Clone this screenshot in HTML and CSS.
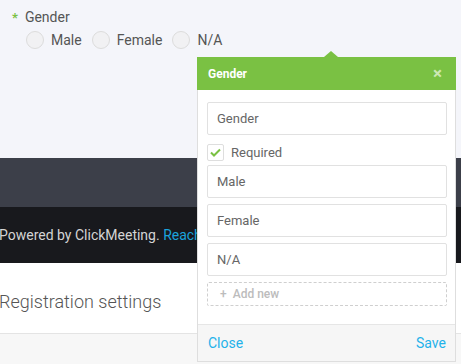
FILE: index.html
```html
<!DOCTYPE html>
<html lang="en">
<head>
  <meta charset="UTF-8" />
  <meta name="viewport" content="width=device-width, initial-scale=1" />
  <title>Registration form</title>
  <link rel="stylesheet" href="styles.css">
</head>
<body>
  <section class="form-preview">
    <div class="field">
      <div class="field-label"><span class="star">*</span> Gender</div>
      <div class="radios">
        <label class="radio"><span class="circle"></span>Male</label>
        <label class="radio"><span class="circle"></span>Female</label>
        <label class="radio"><span class="circle"></span>N/A</label>
      </div>
    </div>
  </section>
  <section class="banner"></section>
  <footer class="powered">
    <p>Powered by ClickMeeting. <a href="#">Reach more people with webinars</a></p>
  </footer>
  <section class="settings">
    <h2>Registration settings</h2>
  </section>
  <section class="settings-body"></section>

  <div class="popup">
    <div class="popup-head">
      <span>Gender</span>
      <span class="close-x">&times;</span>
    </div>
    <div class="popup-body">
      <input type="text" value="Gender" />
      <label class="check">
        <span class="box">
          <svg width="11" height="9" viewBox="0 0 11 9"><path d="M1 4.5 L4 7.5 L10 1.5" fill="none" stroke="#7ac143" stroke-width="2"/></svg>
        </span>
        Required
      </label>
      <input type="text" value="Male" />
      <input type="text" value="Female" />
      <input type="text" value="N/A" />
      <div class="add-new"><span class="plus">+</span> Add new</div>
    </div>
    <div class="popup-foot">
      <a href="#">Close</a>
      <a href="#">Save</a>
    </div>
  </div>
</body>
</html>
```

FILE: styles.css
```css
body {
  font-family: Roboto, "Liberation Sans", sans-serif;
  margin: 0; padding: 0;
  background: #f7f7f7;
  position: relative;
  overflow: hidden;
  height: 364px;
}
.form-preview {
  background: #f4f5fa;
  height: 158px;
  padding: 8px 0 0 12px;
  box-sizing: border-box;
}
.field-label {
  font-size: 14px;
  color: #555;
  display: flex;
  align-items: center;
  gap: 7px;
  height: 18px;
}
.star {
  color: #7ac143;
  font-size: 13px;
  font-weight: bold;
}
.radios {
  display: flex;
  gap: 10px;
  margin: 5px 0 0 14px;
}
.radio {
  display: flex;
  align-items: center;
  gap: 7px;
  font-size: 14px;
  color: #555;
}
.circle {
  width: 16px;
  height: 16px;
  border: 1px solid #dcdcdc;
  border-radius: 50%;
  background: #f1f1f3;
}
.banner {
  height: 49px;
  background: #3c3f49;
}
.powered {
  height: 56px;
  background: #18191d;
  color: #d4d4d4;
  font-size: 14px;
  display: flex;
  align-items: center;
}
.powered p {
  margin: 0 0 0 -1px;
  white-space: nowrap;
}
.powered a {
  color: #1ba3dc;
  text-decoration: none;
}
.settings {
  background: #fff;
  height: 70px;
  border-bottom: 1px solid #e4e4e4;
  display: flex;
  align-items: center;
}
.settings h2 {
  margin: 6px 0 0 -1px;
  font-size: 18px;
  font-weight: 300;
  color: #555;
}
.popup {
  position: absolute;
  left: 197px;
  top: 57px;
  width: 259px;
  border: 1px solid #dedede;
  border-top: none;
  box-sizing: border-box;
  background: #fff;
}
.popup-head {
  background: #7ac143;
  height: 33px;
  margin: 0 -1px;
  padding: 0 14px 0 11px;
  display: flex;
  justify-content: space-between;
  align-items: center;
  color: #fff;
  font-size: 12px;
  font-weight: bold;
  position: relative;
}
.popup-head::before {
  content: "";
  position: absolute;
  left: 127px;
  top: -6px;
  border-left: 7px solid transparent;
  border-right: 7px solid transparent;
  border-bottom: 6px solid #7ac143;
}
.close-x {
  color: #cde8b4;
  font-size: 17px;
  font-weight: bold;
  line-height: 1;
}
.popup-body {
  padding: 12px 8px 18px 9px;
  display: flex;
  flex-direction: column;
  gap: 6px;
}
.popup-body input {
  height: 33px;
  border: 1px solid #e1e1e1;
  border-radius: 2px;
  padding: 0 9px;
  font-family: inherit;
  font-size: 13px;
  color: #666;
  box-sizing: border-box;
  width: 100%;
}
.check {
  display: flex;
  align-items: center;
  gap: 7px;
  font-size: 13px;
  color: #666;
  margin: 3px 0 -2px;
}
.box {
  width: 17px;
  height: 17px;
  border: 1px solid #dedede;
  border-radius: 2px;
  box-sizing: border-box;
  display: flex;
  align-items: center;
  justify-content: center;
}
.add-new {
  height: 24px;
  border: 1px dashed #cfcfcf;
  border-radius: 2px;
  box-sizing: border-box;
  display: flex;
  align-items: center;
  padding-left: 12px;
  color: #bcbcbc;
  font-size: 12px;
  font-weight: 500;
}
.plus {
  margin-right: 6px;
}
.popup-foot {
  background: #f6f6f6;
  border-top: 1px solid #e6e6e6;
  height: 36px;
  display: flex;
  justify-content: space-between;
  align-items: center;
  padding: 0 9px 0 10px;
}
.popup-foot a {
  color: #1fb2ea;
  text-decoration: none;
  font-size: 14px;
}
```
